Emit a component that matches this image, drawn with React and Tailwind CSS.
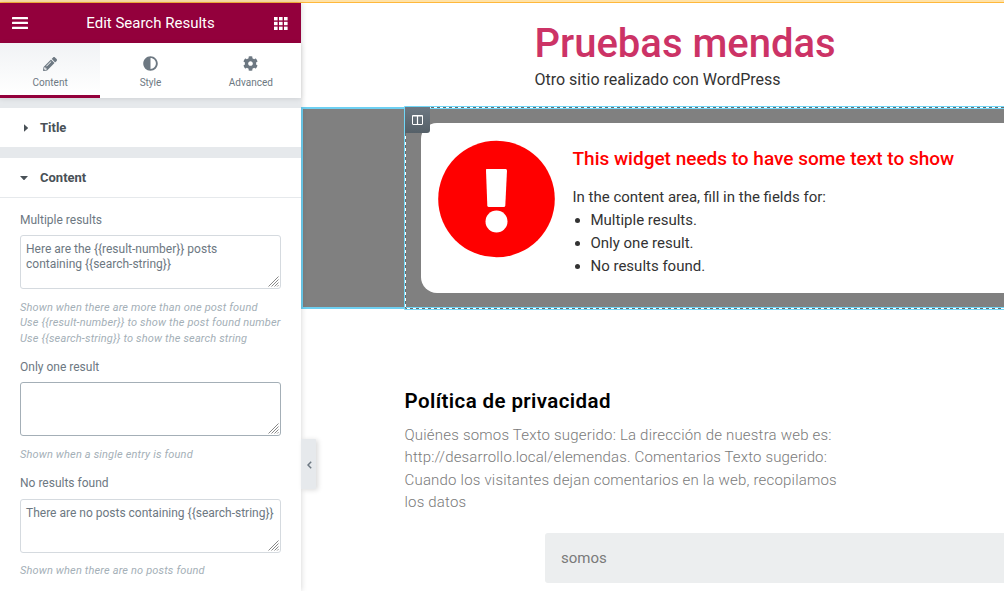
import { FaPencilAlt, FaAdjust, FaCog } from 'react-icons/fa';

const Grip = () => (
  <svg className="absolute right-px bottom-px" width="11" height="11" viewBox="0 0 11 11" stroke="#888" strokeWidth="1">
    <path d="M0.5 10.5L10.5 0.5M3.5 10.5L10.5 3.5M6.5 10.5L10.5 6.5M9.2 10.5L10.5 9.2" fill="none" />
  </svg>
);

const Area = ({ children, active }) => (
  <div
    className={
      'relative h-[54px] w-[261px] rounded-[3px] border px-[5px] pt-[6px] text-[12px] leading-[15px] text-[#6d7882] ' +
      (active ? 'border-[#a4afb7]' : 'border-[#d5dadf]')
    }
  >
    {children}
    <Grip />
  </div>
);

const Field = ({ label, active, text, hints, className }) => (
  <div className={'flex flex-col ' + className}>
    <div className="text-[12px] leading-[15px] text-[#6d7882]">{label}</div>
    <Area active={active}>{text}</Area>
    <div className="pt-[3px] text-[11px] leading-[15.4px] tracking-[0.16px] whitespace-nowrap text-[#a4afb7] italic">
      {hints.map((h) => (
        <div key={h}>{h}</div>
      ))}
    </div>
  </div>
);

const Tab = ({ label, children, active }) => (
  <div
    className={
      'flex flex-1 flex-col items-center border-b-[3px] pt-[13px] text-[10px] text-[#6d7882] ' +
      (active ? 'border-[#93003c] bg-linear-to-b from-[#f1f3f5] to-white' : 'border-transparent')
    }
  >
    {children}
    <span className="mt-[4px] leading-[15px]">{label}</span>
  </div>
);

const Panel = () => (
  <aside className="relative z-10 flex h-[588px] w-[301px] shrink-0 flex-col bg-white shadow-[0_0_6px_rgba(0,0,0,0.18)]">
    <header className="flex h-10 items-center justify-between bg-[#93003c] pr-[13px] pl-3 text-white">
      <svg width="16" height="12" viewBox="0 0 16 12" fill="#fff">
        <rect y="0" width="16" height="2.3" rx="0.5" />
        <rect y="4.8" width="16" height="2.3" rx="0.5" />
        <rect y="9.7" width="16" height="2.3" rx="0.5" />
      </svg>
      <span className="pr-px text-[15px] leading-5">Edit Search Results</span>
      <svg width="14" height="13" viewBox="0 0 14 13" fill="#fff">
        {[0, 5, 10].map((x) => [0, 4.8, 9.6].map((y) => <rect key={x + '-' + y} x={x} y={y} width="3.6" height="3.4" />))}
      </svg>
    </header>
    <nav className="relative flex h-[55px] bg-white shadow-[0_1px_5px_rgba(0,0,0,0.1)]">
      <Tab label="Content" active>
        <FaPencilAlt size={14} className="my-[0.5px]" />
      </Tab>
      <Tab label="Style">
        <FaAdjust size={15} />
      </Tab>
      <Tab label="Advanced">
        <FaCog size={15} />
      </Tab>
    </nav>
    <div className="h-2.5 bg-[#e6e9ec]" />
    <div className="flex h-[39px] items-center pl-6 text-[13px] font-bold text-[#495157]">
      <svg width="4" height="8" viewBox="0 0 4 8" fill="#495157">
        <path d="M0 0.2L4.4 4L0 7.8Z" />
      </svg>
      <span className="ml-3">Title</span>
    </div>
    <div className="h-[11px] bg-[#e6e9ec]" />
    <div className="flex h-10 items-center border-b border-[#e6e9ec] pl-5 text-[13px] font-bold text-[#495157]">
      <svg width="8" height="4" viewBox="0 0 8 4" fill="#495157">
        <path d="M0 0H8L4 4.4Z" />
      </svg>
      <span className="ml-3">Content</span>
    </div>
    <div className="flex flex-col px-5 pt-[15px]">
      <Field
        className="h-[147px] gap-[7px] [&>div:last-child]:pt-1"
        label="Multiple results"
        text={<>Here are the {'{{result-number}}'} posts<br />containing {'{{search-string}}'}</>}
        hints={['Shown when there are more than one post found', 'Use {{result-number}} to show the post found number', 'Use {{search-string}} to show the search string']}
      />
      <Field className="h-[116px] gap-[7px] [&>div:last-child]:pt-1" label="Only one result" active hints={['Shown when a single entry is found']} />
      <Field className="gap-2 [&>div:last-child]:pt-0.5" label="No results found" text={'There are no posts containing {{search-string}}'} hints={['Shown when there are no posts found']} />
    </div>
    <div className="absolute top-[436px] left-[301px] flex h-[50px] w-[15px] items-center justify-center rounded-r-[1px] bg-[#e6e9ec] pt-px pl-px shadow-[2px_1px_5px_rgba(0,0,0,0.15)]">
      <svg width="5" height="8" viewBox="0 0 5 8" fill="none" stroke="#6d7882" strokeWidth="1.5">
        <path d="M4.2 0.8L1 4L4.2 7.2" />
      </svg>
    </div>
  </aside>
);

const Notice = () => (
  <div className="relative mt-[3px] h-[202px] shrink-0">
    <div className="h-[202px] border-2 border-r-0 border-[#6ed0f2] bg-[#808080] pt-[14px] pl-[118px]">
      <div className="flex h-[170px] rounded-l-[16px] bg-white pt-[17px] pl-[17px]">
        <svg width="117" height="118" viewBox="0 0 117 118">
          <circle cx="58.5" cy="59" r="58.3" fill="red" />
          <path d="M48.3 29H67.7Q69 29 69 30.5L67.3 65.5Q67.2 67 65.7 67H50.9Q49.4 67 49.3 65.5L48 30.5Q48 29 48.3 29Z" fill="#fff" />
          <circle cx="58.5" cy="81.5" r="11" fill="#fff" />
        </svg>
        <div className="ml-[17.5px] pt-2 text-[15px] leading-[23px] whitespace-nowrap text-[#333]">
          <h2 className="text-[19px] leading-[22px] font-medium text-[red]">This widget needs to have some text to show</h2>
          <p className="mt-4">In the content area, fill in the fields for:</p>
          <ul className="list-disc pl-[18px]">
            <li>Multiple results.</li>
            <li>Only one result.</li>
            <li>No results found.</li>
          </ul>
        </div>
      </div>
    </div>
    <svg className="absolute -top-px left-[103px]" width="600" height="204" viewBox="0 0 600 204" fill="none">
      <path d="M600 0.5H0.5V203.5H600" stroke="#71d7f7" />
      <path d="M600 1.5H1.5V202.5H600" stroke="#fff" />
      <path d="M600 1.5H1.5V202.5H600" stroke="#6b6b6b" strokeDasharray="3 3" />
      <path d="M600 2.5H2M600 201.5H2" stroke="#71d7f7" />
    </svg>
    <div className="absolute top-0 left-[104px] flex h-[26px] w-[25px] items-center justify-center rounded-br-[3px] bg-linear-to-b from-[#6d7882] to-[#556068] pr-px">
      <svg width="11" height="10" viewBox="0 0 11 10" fill="none" stroke="#fff">
        <rect x="0.5" y="0.5" width="10" height="9" rx="0.5" />
        <path d="M0 1H11M5.5 1V10" strokeWidth="1.2" />
      </svg>
    </div>
  </div>
);

export default function App() {
  return (
    <div className="flex h-[591px] w-[1004px] flex-col overflow-hidden bg-white font-['Roboto',sans-serif]">
      <div className="h-[3px] shrink-0 border-b border-[#ffb83b] bg-[#ffe2a8]" />
      <div className="flex h-[588px]">
        <Panel />
        <main className="flex min-w-0 flex-1 flex-col">
          <div className="h-[101px] shrink-0 pt-[17px] pl-[233.5px] whitespace-nowrap">
            <h1 className="text-[40px] leading-[48px] font-medium text-[#cc3366]">Pruebas mendas</h1>
            <p className="text-[16px] leading-6 text-[#333]">Otro sitio realizado con WordPress</p>
          </div>
          <Notice />
          <article className="mt-[80px] h-[144px] shrink-0 pl-[103.5px] whitespace-nowrap">
            <h3 className="text-[20.5px] leading-6 font-semibold tracking-[0.4px] text-black">Política de privacidad</h3>
            <div className="mt-[11px] text-[15px] leading-[22.4px] font-light tracking-[0.2px] text-[#7a7a7a]">
              <div>Quiénes somos Texto sugerido: La dirección de nuestra web es:</div>
              <div className="tracking-[0.15px]">http://desarrollo.local/elemendas. Comentarios Texto sugerido:</div>
              <div>Cuando los visitantes dejan comentarios en la web, recopilamos</div>
              <div>los datos</div>
            </div>
          </article>
          <div className="ml-[244px] flex h-[50px] shrink-0 items-center rounded-l-[3px] bg-[#eceeef] pl-4 text-[15px] text-[#7a7a7a]">somos</div>
        </main>
      </div>
    </div>
  );
}
